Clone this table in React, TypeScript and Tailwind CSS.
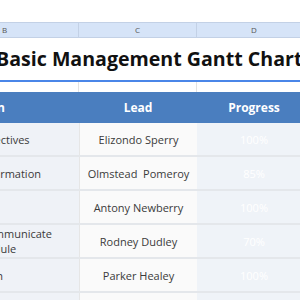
const rows = [
  { task: 'Define objectives', lead: 'Elizondo Sperry', progress: '100%' },
  { task: 'Gather information', lead: 'Olmstead  Pomeroy', progress: '85%' },
  { task: 'Set budget', lead: 'Antony Newberry', progress: '100%' },
  { task: 'Draft & communicate\nwork schedule', lead: 'Rodney Dudley', progress: '70%' },
  { task: 'Project plan', lead: 'Parker Healey', progress: '100%' },
  { task: '', lead: '', progress: '' },
];

const font = { fontFamily: '"Open Sans", "Noto Sans", sans-serif' };

export default function App() {
  return (
    <div className="w-[300px] h-[300px] overflow-hidden bg-white" style={font}>
      <div className="ml-[-69px] w-[380px]">
        <div className="h-[22px] bg-white" />
        <div className="grid grid-cols-[148px_118px_114px] h-[16px] bg-[#d6e4f8] border-y border-[#c3d1e6] text-[8px] text-[#555] leading-[14px]">
          <div className="text-center border-r border-[#c3d1e6]">B</div>
          <div className="text-center border-r border-[#c3d1e6]">C</div>
          <div className="text-center">D</div>
        </div>
        <div className="h-[44px] border-b-2 border-[#4a86e8] flex items-center pl-[65px]">
          <span className="text-[19.6px] font-bold text-[#111] whitespace-nowrap">
            Basic Management Gantt Chart
          </span>
        </div>
        <div className="grid grid-cols-[148px_118px_114px] h-[10px]">
          <div className="border-r border-[#e3e3e3]" />
          <div className="border-r border-[#e3e3e3]" />
          <div />
        </div>
        <div className="grid grid-cols-[148px_118px_114px] h-[31px] bg-[#4a7ebf] text-white font-bold text-[12px] items-center">
          <div className="flex justify-end pr-[74px] whitespace-nowrap">Task Description</div>
          <div className="text-center">Lead</div>
          <div className="text-center">Progress</div>
        </div>
        {rows.map((r, i) => (
          <div
            key={i}
            className="grid grid-cols-[148px_118px_114px] h-[34px] border-b-2 border-[#e4e7eb] text-[11px] leading-[15px] text-[#3a3a3a]"
          >
            <div className="bg-[#eff2f7] flex items-center whitespace-pre pl-[11px]">{r.task}</div>
            <div className="bg-[#fafafa] flex items-center justify-center whitespace-pre border-l border-[#e6e6e6]">{r.lead}</div>
            <div className="bg-[#eff3f8] flex items-center justify-center text-white">{r.progress}</div>
          </div>
        ))}
      </div>
    </div>
  );
}
